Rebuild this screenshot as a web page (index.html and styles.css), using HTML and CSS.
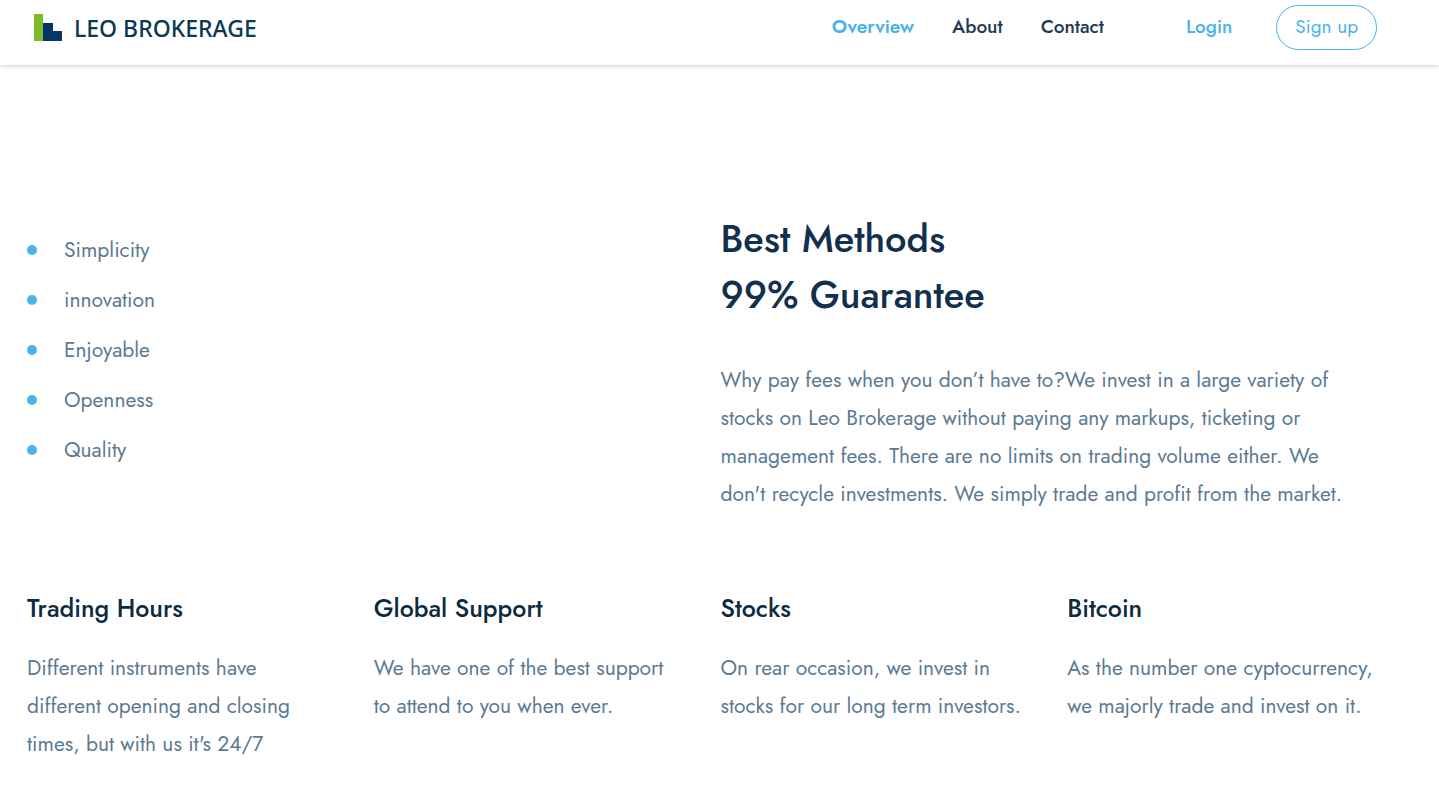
FILE: index.html
```
<!DOCTYPE html>
<html lang="en">
<head>
  <meta charset="UTF-8" />
  <meta name="viewport" content="width=device-width, initial-scale=1.0"/>
  <title>Leo Brokerage</title>
  <link rel="stylesheet" href="styles.css">
</head>
<body>
  <header class="header">
    <a class="logo" href="#">
      <svg class="logo-mark" viewBox="0 0 28 27" aria-hidden="true">
        <path fill="#80bc29" d="M0 0h9v27H0z"/>
        <path fill="#043767" d="M9 9h10v8h9v10H9z"/>
      </svg>
      <span>LEO BROKERAGE</span>
    </a>
    <nav class="nav">
      <a class="active" href="#">Overview</a>
      <a href="#">About</a>
      <a href="#">Contact</a>
    </nav>
    <div class="account">
      <a class="login" href="#">Login</a>
      <a class="signup" href="#">Sign up</a>
    </div>
  </header>

  <main class="container">
    <section class="methods">
      <ul class="values">
        <li>Simplicity</li>
        <li>innovation</li>
        <li>Enjoyable</li>
        <li>Openness</li>
        <li>Quality</li>
      </ul>
      <div class="intro">
        <h2>Best Methods<br>99% Guarantee</h2>
        <p>
          Why pay fees when you don’t have to?We invest in a large variety of<br>
          stocks on Leo Brokerage without paying any markups, ticketing or<br>
          management fees. There are no limits on trading volume either. We<br>
          don't recycle investments. We simply trade and profit from the market.
        </p>
      </div>
    </section>

    <section class="features">
      <div class="feature">
        <h3>Trading Hours</h3>
        <p>Different instruments have<br>different opening and closing<br>times, but with us it's 24/7</p>
      </div>
      <div class="feature">
        <h3>Global Support</h3>
        <p>We have one of the best support<br>to attend to you when ever.</p>
      </div>
      <div class="feature">
        <h3>Stocks</h3>
        <p>On rear occasion, we invest in<br>stocks for our long term investors.</p>
      </div>
      <div class="feature">
        <h3>Bitcoin</h3>
        <p>As the number one cyptocurrency,<br>we majorly trade and invest on it.</p>
      </div>
    </section>
  </main>
</body>
</html>
```
FILE: styles.css
```
* { box-sizing: border-box; margin: 0; padding: 0; }

body {
  font-family: Jost, Lato, sans-serif;
  font-size: 21px;
  line-height: 38px;
  background: #fff;
  color: #5c7a92;
}

a { text-decoration: none; }

.header {
  display: flex;
  align-items: center;
  padding: 5px 62px 15px 34px;
  font-size: 19px;
  line-height: 24px;
  box-shadow: 0 2px 3px rgba(0,0,0,0.14);
}

.logo {
  display: flex;
  align-items: center;
  gap: 12px;
  margin-right: auto;
  font-family: "Noto Sans", "Open Sans", sans-serif;
  font-size: 23px;
  font-weight: 500;
  color: #0b3954;
}

.logo-mark {
  width: 28px;
  height: 27px;
}

.nav {
  display: flex;
  gap: 38px;
  padding-bottom: 2px;
  font-weight: 500;
}

.nav a { color: #1c3a56; }

.nav .active {
  color: #4ab3e8;
  font-weight: 600;
}

.account {
  display: flex;
  align-items: center;
  gap: 44px;
  margin-left: 82px;
}

.login {
  padding-bottom: 2px;
  font-weight: 500;
  color: #4ab3e8;
}

.signup {
  padding: 9px 18px 10px;
  border: 1px solid #4ab3e8;
  border-radius: 23px;
  color: #4ab3e8;
}

.container { padding: 146px 25px 32px 27px; }

.methods {
  display: grid;
  grid-template-columns: 1fr 1fr;
}

.values {
  list-style: none;
  padding-top: 14px;
}

.values li {
  display: flex;
  align-items: center;
  gap: 27px;
  line-height: 50px;
}

.values li::before {
  content: "";
  width: 10px;
  height: 10px;
  border-radius: 50%;
  background: #4ab3e8;
}

h2, h3 {
  font-weight: 500;
  color: #12304d;
}

h2 {
  margin-bottom: 38px;
  font-size: 38px;
  line-height: 56px;
}

.features {
  display: grid;
  grid-template-columns: repeat(4, 1fr);
  margin-top: 76px;
}

h3 {
  margin-bottom: 22px;
  font-size: 25px;
  color: #0d2b3e;
}

@media (max-width: 1100px) {
  .methods { grid-template-columns: 1fr; gap: 40px; }
  .features { grid-template-columns: 1fr 1fr; gap: 40px; }
}
```
